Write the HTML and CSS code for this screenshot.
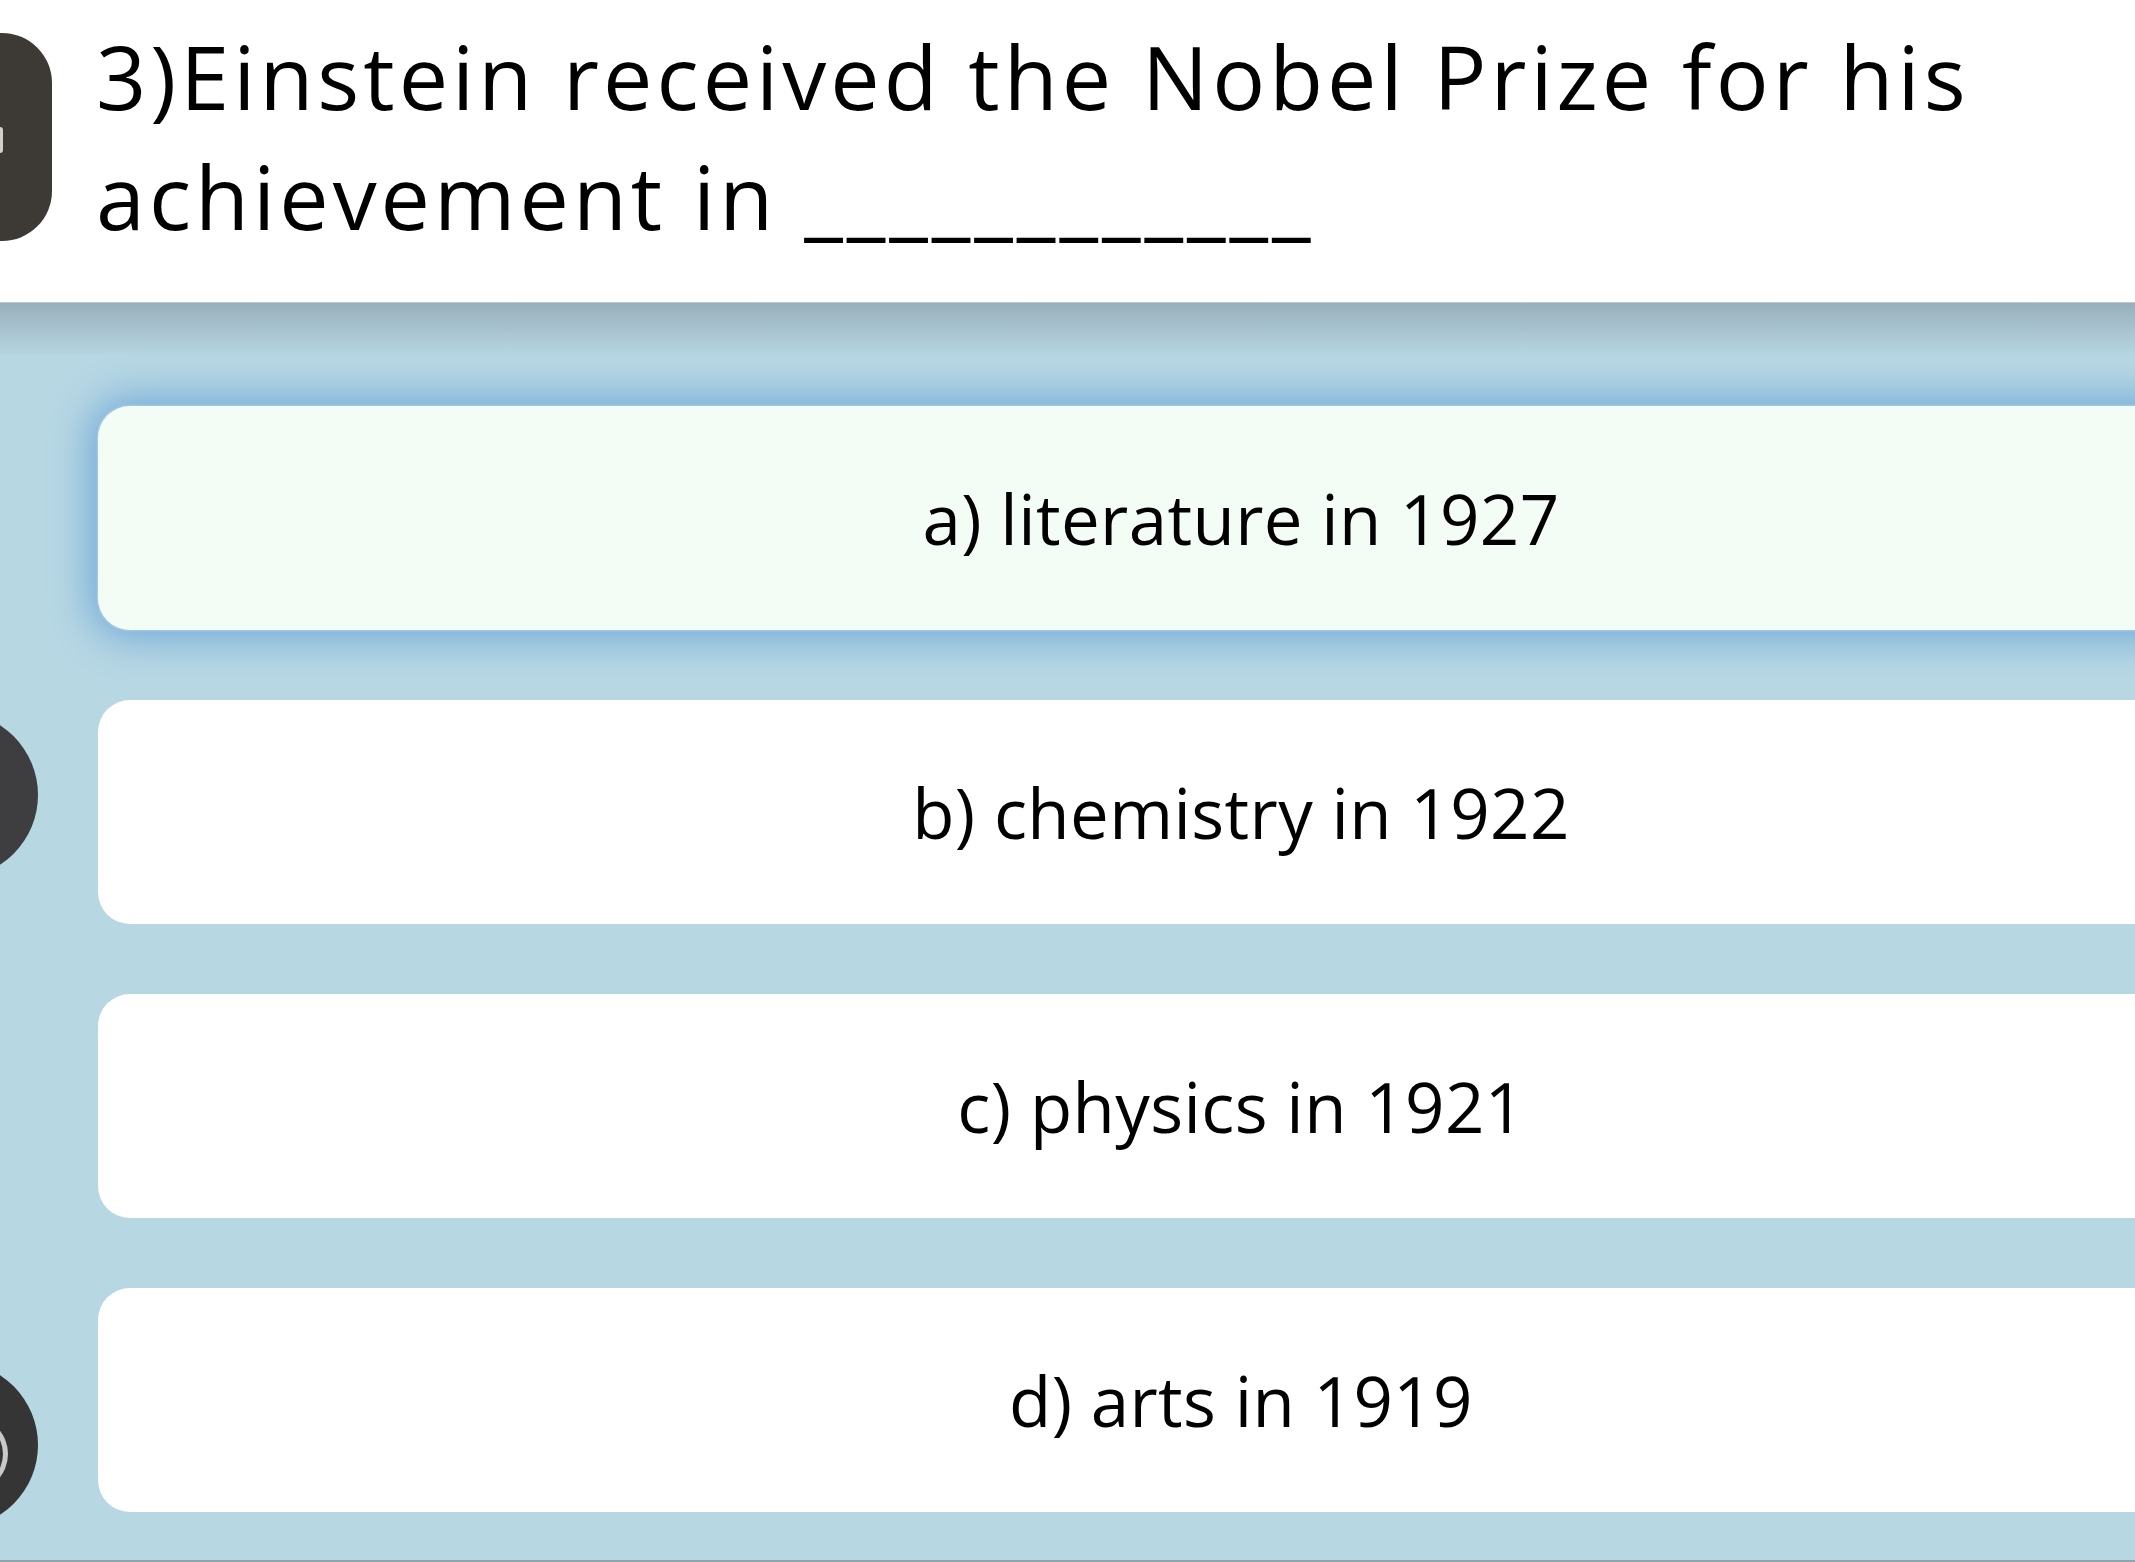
FILE: index.html
```html
<!DOCTYPE html>
<html lang="en">
<head>
<meta charset="utf-8">
<title>Quiz question</title>
<link rel="stylesheet" href="styles.css">
</head>
<body>
<header class="question-bar">
  <div class="q-badge"><span class="q-badge-glyph"></span></div>
  <h1 class="question">3)Einstein received the Nobel Prize for his achievement in ____________</h1>
</header>
<main class="answers">
  <div class="answer-row">
    <div class="side-slot"></div>
    <div class="answer answer-selected">a) literature in 1927</div>
  </div>
  <div class="answer-row">
    <div class="side-slot"><div class="side-dot side-dot-b"></div></div>
    <div class="answer">b) chemistry in 1922</div>
  </div>
  <div class="answer-row">
    <div class="side-slot"></div>
    <div class="answer">c) physics in 1921</div>
  </div>
  <div class="answer-row">
    <div class="side-slot"><div class="side-dot side-dot-d"><span class="side-dot-glyph"></span></div></div>
    <div class="answer">d) arts in 1919</div>
  </div>
</main>
</body>
</html>
```

FILE: styles.css
```css
html, body {
  margin: 0;
  padding: 0;
}
body {
  width: 2135px;
  height: 1562px;
  overflow: hidden;
  background: #b7d7e3;
  font-family: "Open Sans", "Noto Sans", "Liberation Sans", sans-serif;
  color: #000;
}

.question-bar {
  height: 302px;
  box-sizing: border-box;
  background: #ffffff;
  display: flex;
  align-items: flex-start;
}

.q-badge {
  flex: none;
  width: 102px;
  height: 208px;
  margin-left: -50px;
  margin-top: 33px;
  border-radius: 50px;
  background: #3d3935;
  display: flex;
  align-items: center;
}
.q-badge-glyph {
  display: block;
  width: 53px;
  height: 26px;
  margin-top: 6px;
  border-radius: 0 3px 3px 0;
  background: #cfcfcd;
}

.question {
  margin: 16px 0 0 44px;
  width: 1990px;
  font-size: 88px;
  font-weight: 400;
  line-height: 120px;
  letter-spacing: 4px;
}

.answers {
  height: 1260px;
  box-sizing: border-box;
  padding-top: 104px;
  border-bottom: 2px solid #8fa4ae;
  background: linear-gradient(to bottom, #dfe8ec 0, #98afbb 1px, #b7d7e3 55px, #b7d7e3 100%);
  display: flex;
  flex-direction: column;
  gap: 70px;
  overflow: hidden;
}

.answer-row {
  display: flex;
  align-items: flex-start;
}

.side-slot {
  flex: none;
  width: 98px;
  display: flex;
}

.side-dot {
  flex: none;
  width: 166px;
  height: 166px;
  margin-left: -128px;
  border-radius: 50%;
  display: flex;
  align-items: center;
  justify-content: flex-end;
}
.side-dot-b {
  margin-top: 12px;
  background: #3e3e40;
}
.side-dot-d {
  margin-top: 74px;
  background: #353536;
}
.side-dot-glyph {
  display: block;
  width: 40px;
  height: 76px;
  margin-right: 30px;
  margin-top: 18px;
  box-sizing: border-box;
  border: 5px solid #c9c9c9;
  border-left: none;
  border-radius: 0 40px 40px 0;
}

.answer {
  flex: none;
  width: 2286px;
  height: 224px;
  border-radius: 32px 0 0 32px;
  background: #ffffff;
  display: flex;
  align-items: center;
  justify-content: center;
  font-size: 69px;
  letter-spacing: 0.4px;
  line-height: 1;
}

.answer-selected {
  background: #f3fdf6;
  box-shadow: 0 0 2px 1px #a9cfe9, 0 0 40px 7px #6ea6d6;
}
```
